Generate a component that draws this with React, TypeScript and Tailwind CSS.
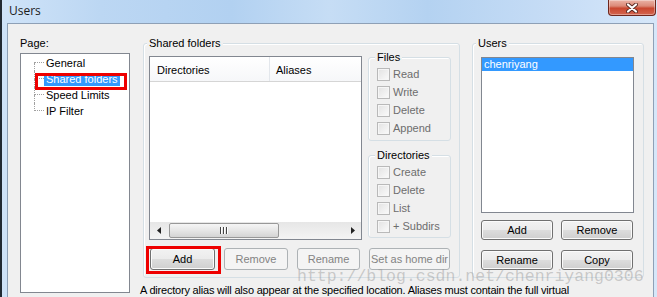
import type { ReactNode } from 'react';

const dotted = 'border-dotted border-[#a0a0a0]';

function Legend({ children }: { children: ReactNode }) {
  return (
    <div className="-mt-[7px] ml-[3px] w-fit bg-[#f0f0f0] px-[2px] text-black">{children}</div>
  );
}

function Check({ label }: { label: string }) {
  return (
    <div className="flex h-[18px] items-center pl-[8px]">
      <span className="h-[13px] w-[13px] border border-[#b9b9b9] bg-[linear-gradient(135deg,#e2e2e2,#fbfbfb)] shadow-[inset_0_0_0_1px_#f6f6f6]" />
      <span className="ml-[3px] text-[#6d6d6d]">{label}</span>
    </div>
  );
}

function Btn({ children, className, disabled }: { children: ReactNode; className: string; disabled?: boolean }) {
  return (
    <div
      className={
        disabled
          ? 'flex items-center justify-center rounded-[3px] border border-[#adb2b5] bg-[#f4f4f4] text-[#838383] ' + className
          : 'flex items-center justify-center rounded-[3px] border border-[#707070] bg-[linear-gradient(#f2f2f2_0%,#ebebeb_50%,#dddddd_50%,#cfcfcf_100%)] text-black shadow-[inset_0_0_0_1px_#fbfbfb] ' + className
      }
    >
      {children}
    </div>
  );
}

const pages = ['General', 'Shared folders', 'Speed Limits', 'IP Filter'];

function Tree() {
  return (
    <div className="mt-[3px] h-[240px] border border-[#828790] bg-white pt-[1px]">
      {pages.map((p, i) => (
        <div key={p} className="relative flex h-[16px] items-center">
          <div className="ml-[13px] flex h-full w-[10px] flex-col">
            <div className={i === 0 ? 'h-[8px] border-b ' + dotted : 'h-[8px] border-b border-l ' + dotted} />
            <div className={i === pages.length - 1 ? 'flex-1' : 'flex-1 border-l ' + dotted} />
          </div>
          <span className={i === 1 ? 'h-[13px] bg-[#3399ff] px-[2px] text-white' : 'h-[13px] px-[2px] text-black'}>{p}</span>
          {i === 1 && <div className="absolute left-[14px] top-[2px] h-[17px] w-[92px] border-[3px] border-[#ee0000]" />}
        </div>
      ))}
    </div>
  );
}

function ListView() {
  return (
    <div className="flex h-[184px] w-[213px] flex-col border border-[#828790] bg-white">
      <div className="flex h-[25px] border-b border-[#d5d5d5] bg-[linear-gradient(#ffffff,#f6f7f9)] text-black">
        <div className="flex w-[120px] items-center border-r border-[#e3e7ec] pl-[7px] pt-[2px]">Directories</div>
        <div className="flex items-center pl-[6px] pt-[2px]">Aliases</div>
      </div>
      <div className="flex-1" />
      <div className="flex h-[17px] bg-[linear-gradient(#e6e6e6,#f4f4f4)]">
        <div className="flex w-[17px] items-center justify-center">
          <svg width="4" height="7" viewBox="0 0 4 7"><path d="M4 0 L0 3.5 L4 7 Z" fill="#222" /></svg>
        </div>
        <div className="flex flex-1 items-center">
          <div className="ml-[2px] flex h-[15px] w-[110px] items-center justify-center rounded-[2px] border border-[#989898] bg-[linear-gradient(#f5f5f5,#e6e6e6_50%,#d4d4d4)]">
            <svg width="8" height="7" viewBox="0 0 8 7">
              <path d="M0.5 0 V7 M3.5 0 V7 M6.5 0 V7" stroke="#444" strokeWidth="1" />
              <path d="M1.5 0 V7 M4.5 0 V7 M7.5 0 V7" stroke="#fff" strokeWidth="1" />
            </svg>
          </div>
        </div>
        <div className="flex w-[17px] items-center justify-center">
          <svg width="4" height="7" viewBox="0 0 4 7"><path d="M0 0 L4 3.5 L0 7 Z" fill="#222" /></svg>
        </div>
      </div>
    </div>
  );
}

export default function App() {
  return (
    <div className="relative flex h-[297px] w-[657px] overflow-hidden font-['Liberation_Sans',Arial,sans-serif] text-[11px] leading-[13px]">
      <div className="w-[2px] bg-[#222a33]" />
      <div className="flex flex-1 flex-col bg-[linear-gradient(90deg,#cfe3f8_0%,#bcd7f3_15%,#b2d1f1_35%,#c6ddf5_50%,#b4d2f1_65%,#c7ddf6_85%,#d6e7f9_100%)]">
        <div className="flex h-[24px] items-start justify-between">
          <div className="pl-[7px] pt-[3px] font-['Open_Sans',sans-serif] text-[12px] leading-[16px] text-[#1b1b1b]">Users</div>
          <div className="mr-[1px] flex h-[16px] w-[48px] items-center justify-center rounded-b-[4px] border border-t-0 border-[#6e261c] bg-[linear-gradient(#ebb3a6_0%,#dc8a78_40%,#c9472f_55%,#d36650_100%)] shadow-[inset_0_0_0_1px_rgba(255,255,255,0.35)]">
            <svg width="12" height="10" viewBox="0 0 12 10">
              <path d="M2 1.5 L10 8.5 M10 1.5 L2 8.5" stroke="#5a2a22" strokeWidth="4" strokeLinecap="round" />
              <path d="M2 1.5 L10 8.5 M10 1.5 L2 8.5" stroke="#fff" strokeWidth="2.2" strokeLinecap="round" />
            </svg>
          </div>
        </div>
        <div className="ml-[5px] mr-[3px] flex-1 border border-b-0 border-[#8ea0b6] bg-[#f0f0f0]">
          <div className="flex pl-[12px] pt-[13px]">
            <div className="flex w-[110px] flex-col">
              <div className="text-black">Page:</div>
              <Tree />
            </div>
            <div className="ml-[10px] flex flex-col pt-[6px]">
              <div className="flex pl-[3px]">
                <div className="flex h-[235px] w-[317px] flex-col rounded-[3px] border border-[#d5dfe5] shadow-[inset_1px_1px_0_#fff]">
                  <Legend>Shared folders</Legend>
                  <div className="mt-[6px] flex pl-[5px]">
                    <ListView />
                    <div className="ml-[6px] flex w-[83px] flex-col">
                      <div className="mt-[1px] rounded-[3px] border border-[#d5dfe5] pb-[3px] shadow-[inset_1px_1px_0_#fff]">
                        <div className="-mt-[7px] ml-[6px] w-fit bg-[#f0f0f0] px-[2px] text-black">Files</div>
                        <div className="mt-[1px]">
                          <Check label="Read" />
                          <Check label="Write" />
                          <Check label="Delete" />
                          <Check label="Append" />
                        </div>
                      </div>
                      <div className="mt-[14px] rounded-[3px] border border-[#d5dfe5] pb-[2px] shadow-[inset_1px_1px_0_#fff]">
                        <div className="-mt-[7px] ml-[6px] w-fit bg-[#f0f0f0] px-[2px] text-black">Directories</div>
                        <div className="mt-[1px]">
                          <Check label="Create" />
                          <Check label="Delete" />
                          <Check label="List" />
                          <Check label="+ Subdirs" />
                        </div>
                      </div>
                    </div>
                  </div>
                  <div className="mt-[8px] flex pl-[6px]">
                    <div className="relative">
                      <Btn className="h-[22px] w-[65px]">Add</Btn>
                      <div className="absolute -left-[4px] -top-[2px] h-[28px] w-[75px] border-[3px] border-[#ee0000]" />
                    </div>
                    <Btn disabled className="ml-[9px] h-[22px] w-[64px]">Remove</Btn>
                    <Btn disabled className="ml-[9px] h-[22px] w-[63px]">Rename</Btn>
                    <Btn disabled className="ml-[9px] h-[22px] w-[81px]">Set as home dir</Btn>
                  </div>
                </div>
                <div className="ml-[12px] flex w-[172px] flex-col rounded-[3px] border border-[#d5dfe5] shadow-[inset_1px_1px_0_#fff]">
                  <Legend>Users</Legend>
                  <div className="ml-[8px] mt-[7px] h-[156px] w-[153px] border border-[#828790] bg-white">
                    <div className="h-[13px] bg-[#3399ff] pl-[2px] text-white">chenriyang</div>
                  </div>
                  <div className="ml-[8px] mt-[7px] flex gap-[8px]">
                    <Btn className="h-[20px] w-[72px]">Add</Btn>
                    <Btn className="h-[20px] w-[72px]">Remove</Btn>
                  </div>
                  <div className="ml-[8px] mt-[10px] flex gap-[8px]">
                    <Btn className="h-[20px] w-[72px]">Rename</Btn>
                    <Btn className="h-[20px] w-[72px]">Copy</Btn>
                  </div>
                </div>
              </div>
              <p className="mt-[6px] whitespace-nowrap tracking-[-0.2px] text-black">
                A directory alias will also appear at the specified location. Aliases must contain the full virtual
              </p>
            </div>
          </div>
        </div>
      </div>
      <div className="pointer-events-none absolute left-[297px] top-[268px] whitespace-nowrap font-['Liberation_Mono',monospace] text-[16.5px] leading-[17px] text-[rgba(150,150,150,0.45)]">
        http://blog.csdn.net/chenriyang0306
      </div>
    </div>
  );
}
